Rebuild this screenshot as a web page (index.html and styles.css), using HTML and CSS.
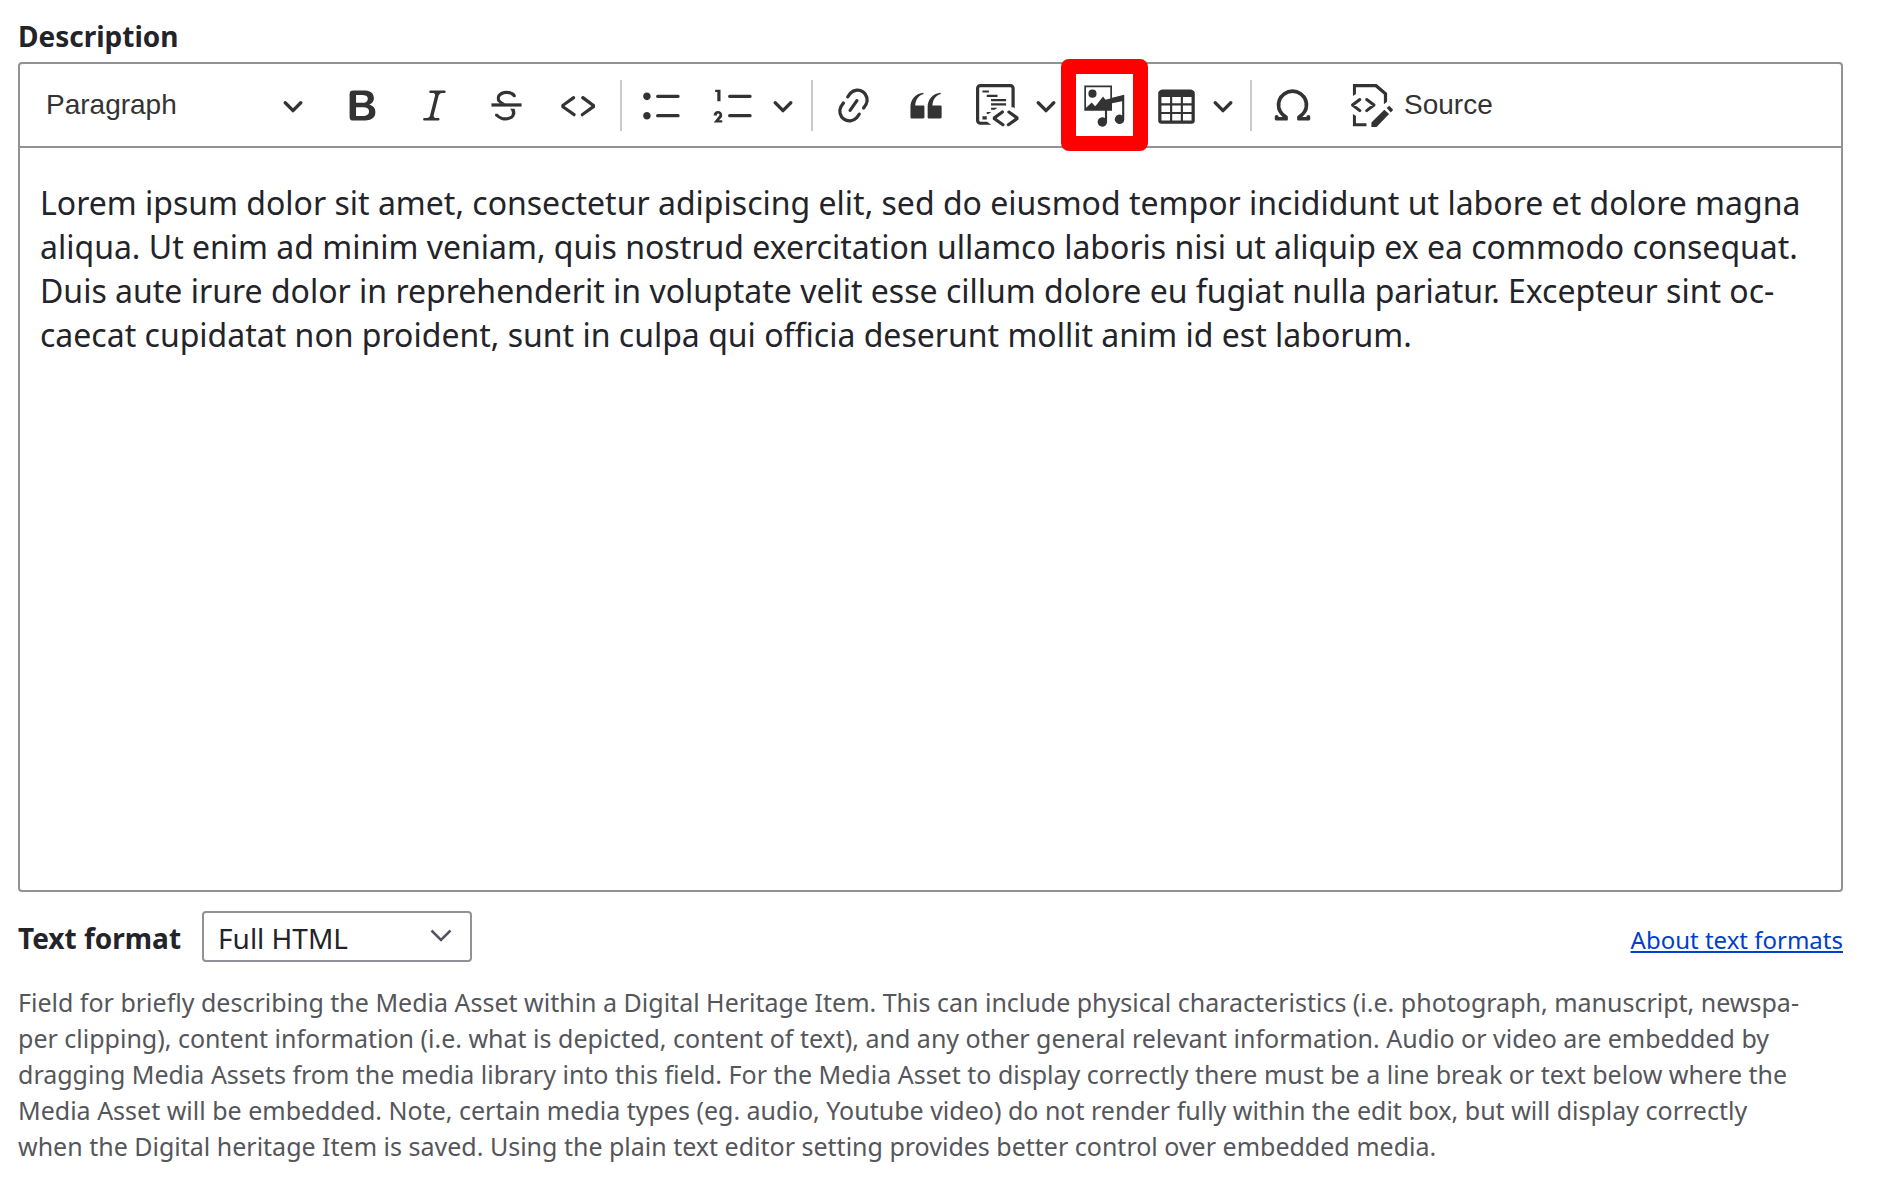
FILE: index.html
```html
<!DOCTYPE html>
<html lang="en">
<head>
<meta charset="utf-8">
<title>Description</title>
<link rel="stylesheet" href="styles.css">
</head>
<body>
<main class="field">
  <div class="field-label" id="description-label">Description</div>
  <div class="editor">
    <div class="toolbar" role="toolbar" aria-label="Editor toolbar">
      <button type="button" class="heading">
        <span>Paragraph</span>
        <svg class="chevron" viewBox="0 0 10 10"><path d="M.941 4.523a.75.75 0 1 1 1.06-1.06l3.006 3.005 3.005-3.005a.75.75 0 1 1 1.06 1.06l-3.549 3.55a.75.75 0 0 1-1.168-.136L.941 4.523z"/></svg>
      </button>
      <button type="button" class="tool" aria-label="Bold"><svg class="icon" viewBox="0 0 20 20"><path d="M10.187 17H5.773c-.637 0-1.092-.138-1.364-.415-.273-.277-.409-.718-.409-1.323V4.738c0-.617.14-1.062.419-1.332.279-.27.73-.406 1.354-.406h4.68c.69 0 1.288.041 1.793.124.506.083.96.242 1.36.478.341.197.644.447.906.75a3.262 3.262 0 0 1 .808 2.162c0 1.401-.722 2.426-2.167 3.075C15.05 10.175 16 11.315 16 13.01a3.756 3.756 0 0 1-2.296 3.504 6.1 6.1 0 0 1-1.517.377c-.571.073-1.238.11-2 .11zm-.217-6.217H7v4.087h3.069c1.977 0 2.965-.69 2.965-2.072 0-.707-.256-1.22-.768-1.537-.512-.319-1.277-.478-2.296-.478zM7 5.13v3.619h2.606c.729 0 1.292-.067 1.69-.2a1.6 1.6 0 0 0 .91-.765c.165-.267.247-.566.247-.897 0-.707-.26-1.176-.778-1.409-.519-.232-1.31-.348-2.375-.348H7z"/></svg></button>
      <button type="button" class="tool" aria-label="Italic"><svg class="icon" viewBox="0 0 20 20"><path d="m9.586 14.633.021.004c-.036.335.095.655.393.962.082.083.173.15.274.201h1.474a.6.6 0 1 1 0 1.2H5.304a.6.6 0 0 1 0-1.2h1.15c.474-.07.809-.182 1.005-.334.157-.122.291-.32.404-.597l2.416-9.55a1.053 1.053 0 0 0-.281-.823 1.12 1.12 0 0 0-.442-.296H8.15a.6.6 0 0 1 0-1.2h6.443a.6.6 0 1 1 0 1.2h-1.195c-.376.056-.65.155-.823.296-.215.175-.423.439-.623.79l-2.366 9.347z"/></svg></button>
      <button type="button" class="tool" aria-label="Strikethrough"><svg class="icon" viewBox="0 0 20 20"><path d="M7 16.4c-.8-.4-1.5-.9-2.2-1.5a.6.6 0 0 1-.2-.5l.3-.6h1c1 1.2 2.1 1.7 3.7 1.7 1 0 1.8-.3 2.3-.6.6-.4.6-1.2.6-1.3.2-1.2-.9-2.1-.9-2.1h2.1c.3.7.4 1.2.4 1.7v.8l-.6 1.2c-.6.8-1.1 1-1.6 1.2a6 6 0 0 1-2.4.6c-1 0-1.8-.3-2.5-.6zM6.8 9 6 8.3c-.4-.5-.5-.8-.5-1.6 0-.7.1-1.3.5-1.8.4-.6 1-1 1.6-1.3a6.3 6.3 0 0 1 4.7 0 4 4 0 0 1 1.7 1l.3.7c0 .1.2.4-.2.7-.4.2-.9.1-1 0a3 3 0 0 0-1.2-1c-.4-.2-1-.3-2-.4-.7 0-1.4.2-2 .6-.8.6-1 .8-1 1.5 0 .8.5 1 1.2 1.5.6.4 1.1.7 1.9 1H6.8z"/><path d="M3 10.5V9h14v1.5z"/></svg></button>
      <button type="button" class="tool" aria-label="Code"><svg class="icon" viewBox="0 0 20 20"><path d="m12.5 5.7 5.2 3.9v1.3l-5.6 4c-.1.2-.3.2-.5.2-.3-.1-.6-.7-.6-1l.3-.4 4.7-3.5L11.5 7l-.2-.2c-.1-.3-.1-.6 0-.8.2-.2.5-.4.8-.4a.8.8 0 0 1 .4.1zm-5.2 0L2 9.6v1.3l5.6 4c.1.2.3.2.5.2.3-.1.7-.7.6-1 0-.1 0-.3-.2-.4l-5-3.5L8.2 7l.2-.2c.1-.3.1-.6 0-.8-.2-.2-.5-.4-.8-.4a.8.8 0 0 0-.3.1z"/></svg></button>
      <span class="separator"></span>
      <button type="button" class="tool" aria-label="Bulleted List"><svg class="icon" viewBox="0 0 20 20"><path d="M7 5.75c0 .414.336.75.75.75h9.5a.75.75 0 1 0 0-1.5h-9.5a.75.75 0 0 0-.75.75zm-6 0C1 4.784 1.777 4 2.75 4c.966 0 1.75.777 1.75 1.75 0 .966-.777 1.75-1.75 1.75C1.784 7.5 1 6.723 1 5.75zm6 9c0 .414.336.75.75.75h9.5a.75.75 0 1 0 0-1.5h-9.5a.75.75 0 0 0-.75.75zm-6 0c0-.966.777-1.75 1.75-1.75.966 0 1.75.777 1.75 1.75 0 .966-.777 1.75-1.75 1.75-.966 0-1.75-.777-1.75-1.75z"/></svg></button>
      <div class="split">
        <button type="button" class="tool" aria-label="Numbered List"><svg class="icon" viewBox="0 0 20 20"><path d="M7 5.75c0 .414.336.75.75.75h9.5a.75.75 0 1 0 0-1.5h-9.5a.75.75 0 0 0-.75.75zM3.5 3v5H2V3.7H1v-1h2.5V3zM.343 17.857l2.59-3.257H2.92a.6.6 0 1 0-1.04 0H.302a2 2 0 1 1 3.995 0h-.001c-.048.405-.16.734-.333.988-.175.254-.59.692-1.244 1.312H4.3v1h-4l.043-.043zM7 14.75a.75.75 0 0 1 .75-.75h9.5a.75.75 0 1 1 0 1.5h-9.5a.75.75 0 0 1-.75-.75z"/></svg></button>
        <button type="button" class="arrow" aria-label="Numbered list styles"><svg class="chevron" viewBox="0 0 10 10"><path d="M.941 4.523a.75.75 0 1 1 1.06-1.06l3.006 3.005 3.005-3.005a.75.75 0 1 1 1.06 1.06l-3.549 3.55a.75.75 0 0 1-1.168-.136L.941 4.523z"/></svg></button>
      </div>
      <span class="separator"></span>
      <button type="button" class="tool" aria-label="Link"><svg class="icon" viewBox="0 0 20 20"><path d="m11.077 15 .991-1.416a.75.75 0 1 1 1.229.86l-1.148 1.64a.748.748 0 0 1-.217.206 5.251 5.251 0 0 1-8.503-5.955.741.741 0 0 1 .12-.274l1.147-1.639a.75.75 0 1 1 1.228.86L4.933 10.7l.006.003a3.75 3.75 0 0 0 6.132 4.294l.006.004zm5.494-5.335a.748.748 0 0 1-.12.274l-1.147 1.639a.75.75 0 1 1-1.228-.86l.86-1.23a3.75 3.75 0 0 0-6.144-4.301l-.86 1.229a.75.75 0 0 1-1.229-.86l1.148-1.64a.748.748 0 0 1 .217-.206 5.251 5.251 0 0 1 8.503 5.955zm-4.563-2.532a.75.75 0 0 1 .184 1.045l-3.155 4.505a.75.75 0 1 1-1.229-.86l3.155-4.506a.75.75 0 0 1 1.045-.184z"/></svg></button>
      <button type="button" class="tool" aria-label="Block quote"><svg class="icon" viewBox="0 0 20 20"><path d="M3 10.423a6.5 6.5 0 0 1 6.056-6.408l.038.67C6.448 5.423 5.354 7.663 5.22 10H9c.552 0 .5.432.5.986v4.511c0 .554-.448.503-1 .503h-5c-.552 0-.5-.449-.5-1.003v-4.574zm8 0a6.5 6.5 0 0 1 6.056-6.408l.038.67c-2.646.739-3.74 2.979-3.873 5.315H17c.552 0 .5.432.5.986v4.511c0 .554-.448.503-1 .503h-5c-.552 0-.5-.449-.5-1.003v-4.574z"/></svg></button>
      <div class="split">
        <button type="button" class="tool" aria-label="Insert code block"><svg class="icon" viewBox="0 0 20 20"><path d="M12.87 12.61a.75.75 0 0 1-.089.976l-.085.07-3.154 2.254 3.412 2.414a.75.75 0 0 1 .237.95l-.057.095a.75.75 0 0 1-.95.237l-.096-.058-4.272-3.022-.003-1.223 4.01-2.867a.75.75 0 0 1 1.047.174zm2.795-.231.095.057 4.011 2.867-.003 1.223-4.272 3.022-.095.058a.75.75 0 0 1-.88-.151l-.07-.086-.058-.095a.75.75 0 0 1 .15-.88l.087-.07 3.412-2.414-3.154-2.253-.085-.071a.75.75 0 0 1 .862-1.207zM16 0a2 2 0 0 1 2 2v9.354l-.663-.492-.837-.001V2a.5.5 0 0 0-.5-.5H2a.5.5 0 0 0-.5.5v15a.5.5 0 0 0 .5.5h3.118L7.156 19H2a2 2 0 0 1-2-2V2a2 2 0 0 1 2-2h14zM5.009 15v1.5H3V15h2.009zm2.188-2-1.471 1H5v-1h2.197zM10 11v.095L8.668 12H7v-1h3zm4-2v1H7V9h7zm0-2v1H7V7h7zm-4-2v1H5V5h5zM6 3v1H3V3h3z"/></svg></button>
        <button type="button" class="arrow" aria-label="Code block languages"><svg class="chevron" viewBox="0 0 10 10"><path d="M.941 4.523a.75.75 0 1 1 1.06-1.06l3.006 3.005 3.005-3.005a.75.75 0 1 1 1.06 1.06l-3.549 3.55a.75.75 0 0 1-1.168-.136L.941 4.523z"/></svg></button>
      </div>
      <button type="button" class="tool highlighted" aria-label="Insert Media"><svg class="icon" viewBox="0 0 20 20"><path fill-rule="evenodd" d="M.6.7h12.9v5.7L19.2 5v11.5a2.2 2.2 0 1 1-1-1.9V8l-4.7 1v3.4h-2.3v5.3a2.2 2.2 0 1 1-1-1.9v-3.4H.6zM1.400 1.500v9.600l2.700-2.500 1.500 1.700.8-.8 2.900-3.700 1.200 1.500 2.200-.6V1.500zM4.400 2.600a1.900 1.900 0 1 1 0 3.800 1.900 1.900 0 0 1 0-3.800z"/></svg></button>
      <button type="button" class="menu-tool" aria-label="Insert table">
        <svg class="icon" viewBox="0 0 20 20"><path d="M3 6v3h4V6H3zm0 4v3h4v-3H3zm0 4v3h4v-3H3zm5 3h4v-3H8v3zm5 0h4v-3h-4v3zm4-4v-3h-4v3h4zm0-4V6h-4v3h4zm1.500 8a1.500 1.500 0 0 1-1.500 1.500H3A1.500 1.500 0 0 1 1.500 17V4c.222-.863 1.068-1.500 2-1.500h13c.932 0 1.778.637 2 1.500v13zM12 13v-3H8v3h4zm0-4V6H8v3h4z"/></svg>
        <svg class="chevron" viewBox="0 0 10 10"><path d="M.941 4.523a.75.75 0 1 1 1.06-1.06l3.006 3.005 3.005-3.005a.75.75 0 1 1 1.06 1.06l-3.549 3.55a.75.75 0 0 1-1.168-.136L.941 4.523z"/></svg>
      </button>
      <span class="separator"></span>
      <button type="button" class="tool" aria-label="Special characters"><svg class="icon" viewBox="0 0 20 20"><path d="M10 2.5a7.47 7.47 0 0 1 4.231 1.31 7.268 7.268 0 0 1 2.703 3.454 7.128 7.128 0 0 1 .199 4.353c-.39 1.436-1.475 2.72-2.633 3.677h2.013c0-.226.092-.443.254-.603a.876.876 0 0 1 1.229 0c.163.16.254.377.254.603v.853c0 .209-.078.41-.22.567a.873.873 0 0 1-.547.28l-.101.006h-4.695a.517.517 0 0 1-.516-.518v-1.265c0-.21.128-.398.317-.489a5.601 5.601 0 0 0 2.492-2.371 5.459 5.459 0 0 0 .552-3.693 5.53 5.53 0 0 0-1.955-3.2A5.71 5.71 0 0 0 10 4.206 5.708 5.708 0 0 0 6.419 5.46 5.527 5.527 0 0 0 4.46 8.663a5.457 5.457 0 0 0 .554 3.695 5.6 5.6 0 0 0 2.497 2.37.55.55 0 0 1 .317.49v1.264c0 .286-.23.518-.516.518H2.618a.877.877 0 0 1-.614-.25.845.845 0 0 1-.254-.603v-.853c0-.226.091-.443.254-.603a.876.876 0 0 1 1.228 0c.163.16.255.377.255.603h1.925c-1.158-.958-2.155-2.241-2.545-3.678a7.128 7.128 0 0 1 .199-4.352 7.268 7.268 0 0 1 2.703-3.455A7.475 7.475 0 0 1 10 2.5z"/></svg></button>
      <button type="button" class="source">
        <svg class="icon" viewBox="0 0 20 20"><path d="M.9 0h11l4.900 4.200v4.100l-1.500 1.100V4.900L11.300 1.500H2.300v3.100L.9 5.600zM.9 14l1.400.9v3.300h4.900v1.400H.9zM9.500 20v-2.100l6-5.900 2.200 2-5.800 6zM16.600 11.200l1.200-1.100 1.800 1.900-1.100 1.200z"/><path fill="none" stroke="#333" stroke-width="1.4" stroke-linecap="round" stroke-linejoin="round" d="M4.100 7.200.7 9.800l3.400 2.600M7.300 7.200l3.400 2.600-3.400 2.600"/></svg>
        <span>Source</span>
      </button>
    </div>
    <div class="content" contenteditable="true" role="textbox" aria-multiline="true" aria-labelledby="description-label" spellcheck="false">
      <p>Lorem ipsum dolor sit amet, consectetur adipiscing elit, sed do eiusmod tempor incididunt ut labore et dolore magna aliqua. Ut enim ad minim veniam, quis nostrud exercitation ullamco laboris nisi ut aliquip ex ea commodo consequat. Duis aute irure dolor in reprehenderit in voluptate velit esse cillum dolore eu fugiat nulla pariatur. Excepteur sint oc&shy;caecat cupidatat non proident, sunt in culpa qui officia deserunt mollit anim id est laborum.</p>
    </div>
  </div>
  <div class="format-row">
    <label class="format-label" for="format">Text format</label>
    <select class="format-select" id="format"><option>Full HTML</option></select>
    <a class="format-help" href="#about">About text formats</a>
  </div>
  <p class="help">Field for briefly describing the Media Asset within a Digital Heritage Item. This can include physical characteristics (i.e. photograph, manuscript, newspa&shy;per clipping), content information (i.e. what is depicted, content of text), and any other general relevant information. Audio or video are embedded by dragging Media Assets from the media library into this field. For the Media Asset to display correctly there must be a line break or text below where the Media Asset will be embedded. Note, certain media types (eg. audio, Youtube video) do not render fully within the edit box, but will display correctly when the Digital heritage Item is saved. Using the plain text editor setting provides better control over embedded media.</p>
</main>
</body>
</html>
```
FILE: styles.css
```css
* {
  box-sizing: border-box;
}

body {
  margin: 0;
  background: #fff;
  color: #232429;
  font-family: "Noto Sans", "Open Sans", sans-serif;
}

.field {
  padding: 18px 43px 18px 18px;
}

.field-label {
  margin-bottom: 8px;
  font-size: 28px;
  font-weight: 700;
  line-height: 36px;
}

/* Editor frame */
.editor {
  border: 2px solid #919297;
  border-radius: 4px;
}

.toolbar {
  display: flex;
  align-items: center;
  gap: 5px;
  padding: 7px 8px;
  border-bottom: 2px solid #919297;
}

.toolbar button {
  display: flex;
  flex: none;
  align-items: center;
  height: 68px;
  margin: 0;
  padding: 0;
  border: 0;
  border-radius: 4px;
  background: none;
  color: #333;
  font-family: "Liberation Sans", Arial, sans-serif;
  font-size: 28px;
}

.toolbar .heading {
  justify-content: space-between;
  width: 296px;
  padding: 0 20px 0 18px;
}

.toolbar .tool {
  justify-content: center;
  width: 67px;
}

.toolbar .arrow {
  width: 35px;
  padding-left: 4px;
}

.toolbar .menu-tool {
  gap: 14px;
  padding: 0 8px 0 12px;
}

.toolbar .source {
  gap: 10px;
  padding: 0 20px;
}

.split {
  display: flex;
}

.icon,
.chevron {
  display: block;
  flex: none;
  fill: #333;
}

.icon {
  width: 43px;
  height: 43px;
  overflow: visible;
}

.chevron {
  width: 22px;
  height: 22px;
}

.separator {
  width: 2px;
  height: 51px;
  margin: 0 2px 0 3px;
  background: #c9cad0;
}

/* Red callout drawn around the media button */
.toolbar .highlighted {
  position: relative;
}

.highlighted::after {
  content: "";
  position: absolute;
  inset: -12px -10px;
  border: 15px solid #f00;
  border-radius: 8px;
}

.content {
  min-height: 742px;
  padding: 33px 20px;
  font-size: 32px;
  line-height: 44px;
}

.content p {
  margin: 0;
}

/* Text format */
.format-row {
  display: flex;
  align-items: baseline;
  margin-top: 19px;
}

.format-label {
  margin-right: 21px;
  font-size: 28px;
  font-weight: 700;
  line-height: 36px;
}

.format-select {
  appearance: none;
  width: 270px;
  height: 51px;
  padding: 3px 40px 0 14px;
  border: 2px solid #919297;
  border-radius: 4px;
  background: #fff url("data:image/svg+xml,%3Csvg xmlns='http://www.w3.org/2000/svg' width='22' height='14'%3E%3Cpath d='M1.500 1.500l9.500 9.500 9.500-9.500' fill='none' stroke='%23545560' stroke-width='2.500'/%3E%3C/svg%3E") no-repeat right 18px top 16px;
  color: #232429;
  font-family: inherit;
  font-size: 28px;
}

.format-help {
  margin-left: auto;
  color: #003ecc;
  font-size: 24px;
  line-height: 36px;
}

.help {
  margin: 22px 0 0;
  padding-right: 36px;
  color: #55565b;
  font-size: 25px;
  line-height: 36px;
}
```
